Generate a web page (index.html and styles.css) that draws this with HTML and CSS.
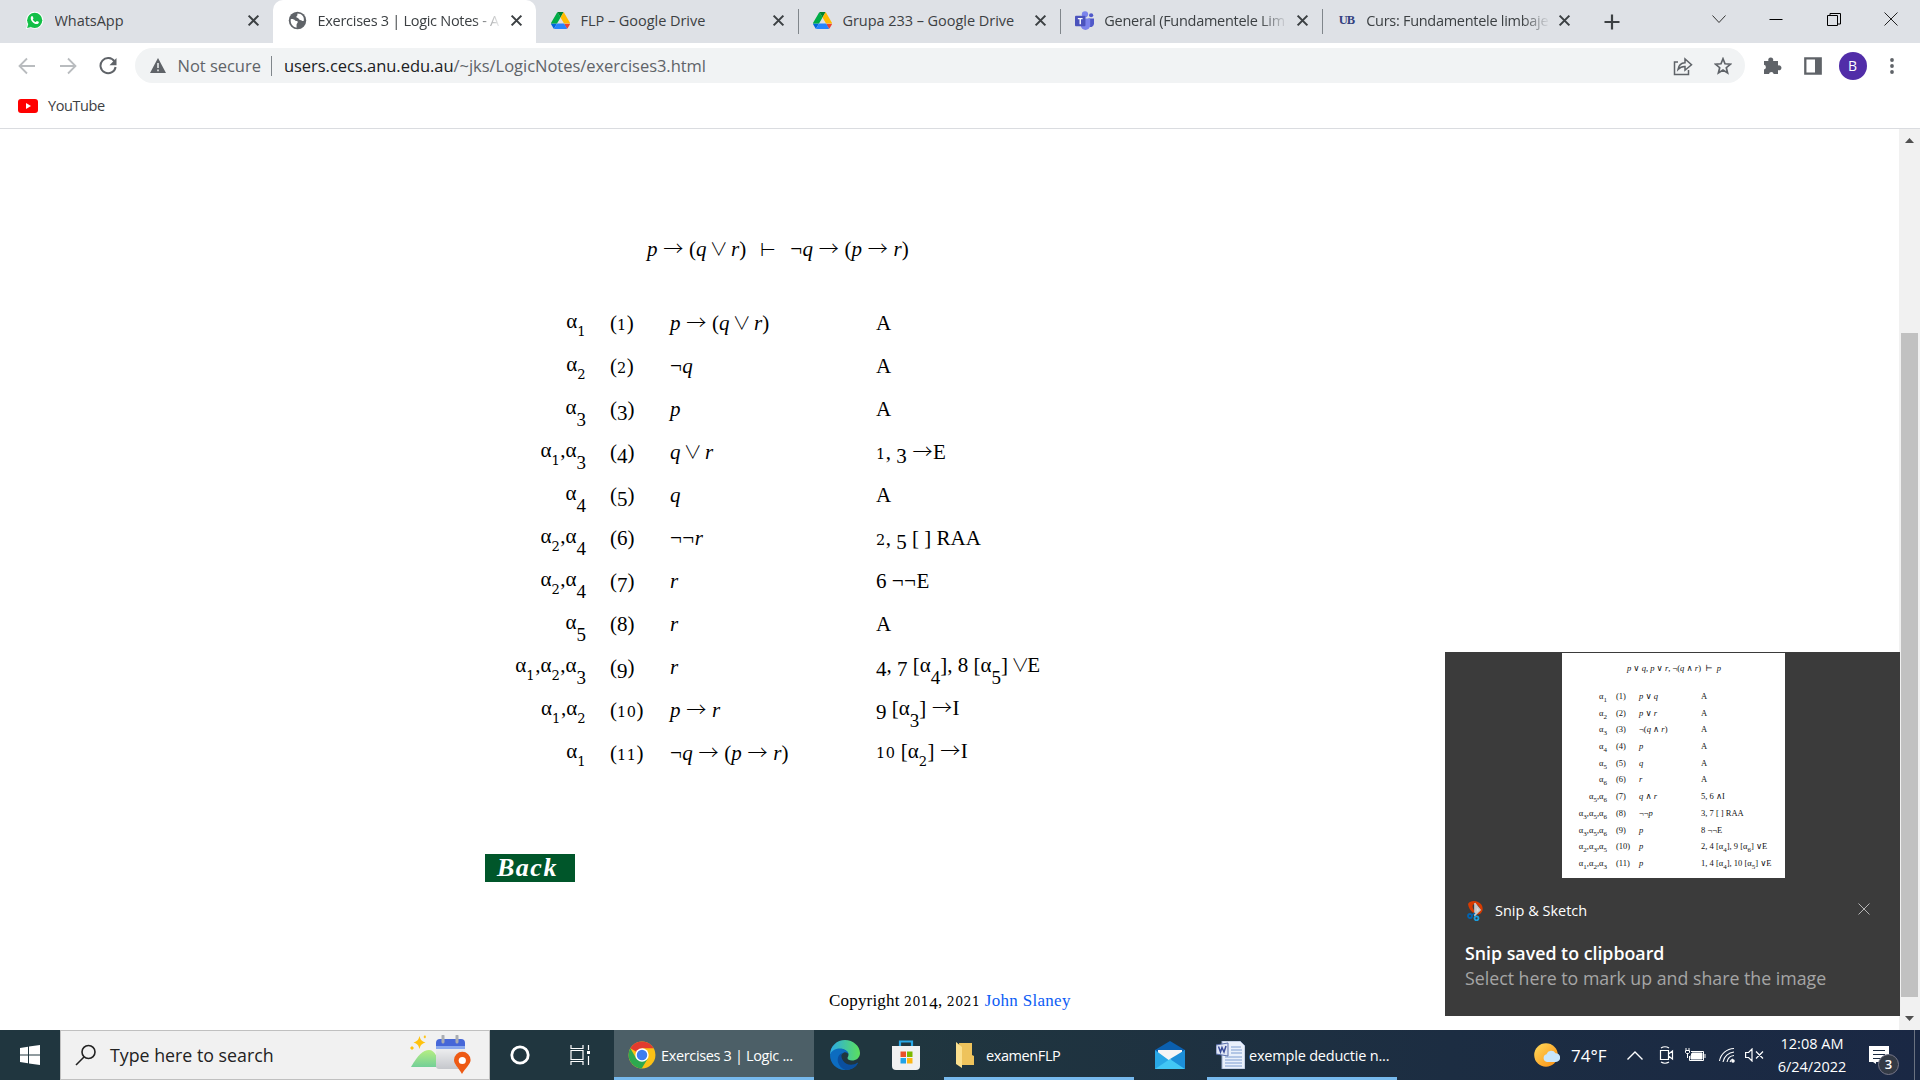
FILE: index.html
```
<!DOCTYPE html>
<html lang="en">
<head>
<meta charset="utf-8">
<title>Exercises 3 | Logic Notes</title>
<link rel="stylesheet" href="styles.css">
</head>
<body>
<svg width="0" height="0" class="defs">
  <defs>
    <symbol id="x" viewBox="0 0 12 12"><path d="M1.5 1.5l9 9M10.5 1.5l-9 9" stroke="#3c4043" stroke-width="1.9" fill="none"/></symbol>
    <symbol id="drive" viewBox="0 0 87 78"><path fill="#0066da" d="M6.6 66.85l3.85 6.65c.8 1.4 1.95 2.5 3.3 3.3l13.75-23.8H0c0 1.55.4 3.1 1.2 4.5z"/><path fill="#00ac47" d="M43.65 25L29.9 1.2c-1.35.8-2.5 1.9-3.3 3.3L1.2 48.5C.4 49.9 0 51.45 0 53h27.5z"/><path fill="#ea4335" d="M73.55 76.8c1.35-.8 2.5-1.9 3.3-3.3l8.95-15.5c.8-1.4 1.2-2.95 1.2-4.5H59.8l5.85 11.5z"/><path fill="#00832d" d="M43.65 25L57.4 1.2C56.05.4 54.5 0 52.9 0H34.4c-1.6 0-3.15.45-4.5 1.2z"/><path fill="#2684fc" d="M59.8 53H27.5L13.75 76.8c1.35.8 2.9 1.2 4.5 1.2h50.8c1.6 0 3.15-.45 4.5-1.2z"/><path fill="#ffba00" d="M73.4 26.5L60.7 4.5c-.8-1.4-1.95-2.5-3.3-3.3L43.65 25 59.8 53h27.45c0-1.55-.4-3.1-1.2-4.5z"/></symbol>
  </defs>
</svg>

<header class="tabs">
  <div class="tab first">
    <svg class="fav" viewBox="0 0 20 20"><path d="M1 19l1.4-4.8A9 9 0 1 1 6 17.7z" fill="#fff"/><circle cx="10.2" cy="9.8" r="8" fill="#12bf47"/><path d="M2.2 18l1.3-4.5 3.2 3.3z" fill="#12bf47"/><path d="M6.2 6.2c1-1.4 1.8-1 2.2.1l.5 1.2c.1.5-.8 1-.7 1.4.7 1.4 1.700 2.200 3 2.700.5 0 .9-1.200 1.300-1.100l1.900.9c.5.4-.1 2-1.200 2.300-3.600.8-8-3.900-7-7.500z" fill="#fff"/></svg>
    <span class="label">WhatsApp</span><svg class="close"><use href="#x"/></svg>
  </div>
  <div class="tab active">
    <svg class="fav" viewBox="0 0 20 20"><circle cx="10" cy="10" r="9.200" fill="#5f6368"/><path d="M3 8.500c2-.3 3.500.3 4.500 1.500 1 1 2.500 0 2.800 1.300.2 1.400-1.300 1.700-1.300 3.200v3C5 17.200 2 13 3 8.500zM10 2.500c-.5 1.200.5 1.700-.5 2.500-1 .6-1 2 .3 2.200 1.700.2 1.200 2.200 3 2.200 1.500 0 2 1.500 3.700 1.100C17.600 6 14.500 2.500 10 2.500z" fill="#fff"/></svg>
    <span class="label fade">Exercises 3 | Logic Notes - A</span><svg class="close"><use href="#x"/></svg>
  </div>
  <div class="tab">
    <svg class="fav"><use href="#drive"/></svg>
    <span class="label">FLP – Google Drive</span><svg class="close"><use href="#x"/></svg>
  </div>
  <div class="tab sep">
    <svg class="fav"><use href="#drive"/></svg>
    <span class="label">Grupa 233 – Google Drive</span><svg class="close"><use href="#x"/></svg>
  </div>
  <div class="tab sep">
    <svg class="fav" viewBox="0 0 20 20"><circle cx="10.500" cy="3.500" r="3.300" fill="#7b83eb"/><circle cx="17" cy="4.500" r="2.200" fill="#5059c9"/><path d="M14 8h6v5.500a3.500 3.500 0 0 1-5 3z" fill="#5059c9"/><path d="M6 8h10v7a5 5 0 0 1-10 0z" fill="#7b83eb"/><rect y="5" width="11" height="11" rx="1" fill="#4b53bc"/><path d="M3 8h5M5.500 8v6" stroke="#fff" stroke-width="1.500"/></svg>
    <span class="label fade">General (Fundamentele Lim</span><svg class="close"><use href="#x"/></svg>
  </div>
  <div class="tab sep">
    <span class="fav ub">UB</span>
    <span class="label fade">Curs: Fundamentele limbaje</span><svg class="close"><use href="#x"/></svg>
  </div>
  <div class="newtab"><svg width="16" height="16"><path d="M8 .500v15M.500 8h15" stroke="#3c4043" stroke-width="2.200"/></svg></div>
  <div class="winctl">
    <svg width="14" height="14" fill="none" stroke="#333"><path d="M.500 3.500l6.500 7 6.500-7"/></svg>
    <svg width="14" height="14" stroke="#000"><path d="M.500 7.500h13"/></svg>
    <svg width="14" height="14" fill="none" stroke="#000"><path d="M.500 3.500h10v10H.500zM3 3.500v-2h10.500V12H11"/></svg>
    <svg width="14" height="14" fill="none" stroke="#222"><path d="M.500.500l13 13M13.500.500l-13 13"/></svg>
  </div>
</header>

<div class="toolbar">
  <svg class="nav" viewBox="0 0 18 18" fill="none" stroke="#b9bcbf" stroke-width="1.800"><path d="M17 9H2M9 1.500L1.500 9 9 16.500"/></svg>
  <svg class="nav" viewBox="0 0 18 18" fill="none" stroke="#b9bcbf" stroke-width="1.800"><path d="M1 9h15M9 1.500L16.500 9 9 16.500"/></svg>
  <svg class="nav" viewBox="0 0 18 18"><path d="M15.500 4.500A7.600 7.600 0 1 0 16.600 10" fill="none" stroke="#5f6368" stroke-width="2"/><path d="M17.500 1v7.200h-7z" fill="#5f6368"/></svg>
  <div class="omnibox">
    <svg width="16" height="15" viewBox="0 0 16 15"><path d="M8 0l8 15H0z" fill="#5f6368"/><path d="M8 5v5M8 11.500v1.700" stroke="#f1f3f4" stroke-width="1.500"/></svg>
    <span class="insecure">Not secure</span>
    <span class="url"><span class="host">users.cecs.anu.edu.au</span>/~jks/LogicNotes/exercises3.html</span>
    <svg class="share" width="20" height="20" viewBox="0 0 20 20" fill="none" stroke="#5f6368" stroke-width="1.500"><path d="M5 6H1.500v12.500h14V14"/><path d="M5 13.500c.7-4.500 3-6.500 7-6.700V3l6.500 5.700-6.500 5.500v-3.700c-3-.1-5 .8-7 3z"/></svg>
    <svg width="18" height="18" viewBox="0 0 18 18"><path d="M9 1.800l2 5 5.500.4-4.200 3.500 1.300 5.300L9 13.100 4.400 16l1.300-5.300-4.200-3.500 5.500-.4z" fill="none" stroke="#5f6368" stroke-width="1.700"/></svg>
  </div>
  <svg class="ext" width="19" height="19" viewBox="0 0 19 19"><path d="M1 5h4.500a2.500 2.500 0 1 1 4.500 0H15v4.500a2.500 2.500 0 1 1 0 4.600V18h-4.300a2.400 2.400 0 0 0-4.700 0H1v-4.500a2.400 2.400 0 0 0 0-4.700z" fill="#5f6368"/></svg>
  <svg class="panel" width="18" height="18"><path d="M1.300 1.300h15.400v15.400H1.300z" fill="none" stroke="#5f6368" stroke-width="2.300"/><path d="M11 1h6v16h-6z" fill="#5f6368"/></svg>
  <span class="avatar">B</span>
  <svg class="menu" width="4" height="16" fill="#5f6368"><circle cx="2" cy="2" r="1.900"/><circle cx="2" cy="8" r="1.900"/><circle cx="2" cy="14" r="1.900"/></svg>
</div>

<div class="bookmarks">
  <svg width="20" height="14"><rect width="20" height="14" rx="3" fill="#f00"/><path d="M8 4v6l5-3z" fill="#fff"/></svg>
  <span>YouTube</span>
</div>

<div class="viewport">
  <main class="page">
    <div class="sequent"><i>p</i> <span class="ar">→</span> (<i>q</i> <span class="or">∨</span> <i>r</i>)<span class="ts">⊢</span><span class="ng">¬</span><i>q</i> <span class="ar">→</span> (<i>p</i> <span class="ar">→</span> <i>r</i>)</div>
    <div class="proof">
      <div class="line"><span class="as">α<sub><span class="lo">1</span></sub></span><span>(<span class="lo">1</span>)</span><span><i>p</i> <span class="ar">→</span> (<i>q</i> <span class="or">∨</span> <i>r</i>)</span><span>A</span></div>
      <div class="line"><span class="as">α<sub><span class="lo">2</span></sub></span><span>(<span class="lo">2</span>)</span><span><span class="ng">¬</span><i>q</i></span><span>A</span></div>
      <div class="line"><span class="as">α<sub><span class="dn">3</span></sub></span><span>(<span class="dn">3</span>)</span><span><i>p</i></span><span>A</span></div>
      <div class="line"><span class="as">α<sub><span class="lo">1</span></sub>,α<sub><span class="dn">3</span></sub></span><span>(<span class="dn">4</span>)</span><span><i>q</i> <span class="or">∨</span> <i>r</i></span><span><span class="lo">1</span>, <span class="dn">3</span> <span class="ar">→</span>E</span></div>
      <div class="line"><span class="as">α<sub><span class="dn">4</span></sub></span><span>(<span class="dn">5</span>)</span><span><i>q</i></span><span>A</span></div>
      <div class="line"><span class="as">α<sub><span class="lo">2</span></sub>,α<sub><span class="dn">4</span></sub></span><span>(<span class="up">6</span>)</span><span><span class="ng">¬¬</span><i>r</i></span><span><span class="lo">2</span>, <span class="dn">5</span> [ ] RAA</span></div>
      <div class="line"><span class="as">α<sub><span class="lo">2</span></sub>,α<sub><span class="dn">4</span></sub></span><span>(<span class="dn">7</span>)</span><span><i>r</i></span><span><span class="up">6</span> <span class="ng">¬¬</span>E</span></div>
      <div class="line"><span class="as">α<sub><span class="dn">5</span></sub></span><span>(<span class="up">8</span>)</span><span><i>r</i></span><span>A</span></div>
      <div class="line"><span class="as">α<sub><span class="lo">1</span></sub>,α<sub><span class="lo">2</span></sub>,α<sub><span class="dn">3</span></sub></span><span>(<span class="dn">9</span>)</span><span><i>r</i></span><span class="raised"><span class="dn">4</span>, <span class="dn">7</span> [α<sub><span class="dn">4</span></sub>], <span class="up">8</span> [α<sub><span class="dn">5</span></sub>] <span class="or">∨</span>E</span></div>
      <div class="line"><span class="as">α<sub><span class="lo">1</span></sub>,α<sub><span class="lo">2</span></sub></span><span>(<span class="lo">10</span>)</span><span><i>p</i> <span class="ar">→</span> <i>r</i></span><span class="raised"><span class="dn">9</span> [α<sub><span class="dn">3</span></sub>] <span class="ar">→</span>I</span></div>
      <div class="line"><span class="as">α<sub><span class="lo">1</span></sub></span><span>(<span class="lo">11</span>)</span><span><span class="ng">¬</span><i>q</i> <span class="ar">→</span> (<i>p</i> <span class="ar">→</span> <i>r</i>)</span><span class="raised"><span class="lo">10</span> [α<sub><span class="lo">2</span></sub>] <span class="ar">→</span>I</span></div>
    </div>
    <a class="back">Back</a>
    <footer class="copy">Copyright <span class="lo">201</span><span class="dn">4</span>, <span class="lo">2021</span> <a>John Slaney</a></footer>
  </main>
  <div class="scroll">
    <svg width="9" height="5"><path d="M4.500 0L9 5H0z" fill="#505050"/></svg>
    <div class="thumb"></div>
    <svg width="9" height="5"><path d="M4.500 5L9 0H0z" fill="#505050"/></svg>
  </div>
</div>

<aside class="toast">
  <div class="snip">
    <div class="snip-title"><i>p</i> ∨ <i>q</i>, <i>p</i> ∨ <i>r</i>, ¬(<i>q</i> ∧ <i>r</i>) &nbsp;⊢&nbsp; <i>p</i></div>
    <div class="sl"><span class="as">α<sub>1</sub></span><span>(1)</span><span><i>p</i> ∨ <i>q</i></span><span>A</span></div>
    <div class="sl"><span class="as">α<sub>2</sub></span><span>(2)</span><span><i>p</i> ∨ <i>r</i></span><span>A</span></div>
    <div class="sl"><span class="as">α<sub>3</sub></span><span>(3)</span><span>¬(<i>q</i> ∧ <i>r</i>)</span><span>A</span></div>
    <div class="sl"><span class="as">α<sub>4</sub></span><span>(4)</span><span><i>p</i></span><span>A</span></div>
    <div class="sl"><span class="as">α<sub>5</sub></span><span>(5)</span><span><i>q</i></span><span>A</span></div>
    <div class="sl"><span class="as">α<sub>6</sub></span><span>(6)</span><span><i>r</i></span><span>A</span></div>
    <div class="sl"><span class="as">α<sub>5</sub>,α<sub>6</sub></span><span>(7)</span><span><i>q</i> ∧ <i>r</i></span><span>5, 6 ∧I</span></div>
    <div class="sl"><span class="as">α<sub>3</sub>,α<sub>5</sub>,α<sub>6</sub></span><span>(8)</span><span>¬¬<i>p</i></span><span>3, 7 [ ] RAA</span></div>
    <div class="sl"><span class="as">α<sub>3</sub>,α<sub>5</sub>,α<sub>6</sub></span><span>(9)</span><span><i>p</i></span><span>8 ¬¬E</span></div>
    <div class="sl"><span class="as">α<sub>2</sub>,α<sub>3</sub>,α<sub>5</sub></span><span>(10)</span><span><i>p</i></span><span>2, 4 [α<sub>4</sub>], 9 [α<sub>6</sub>] ∨E</span></div>
    <div class="sl"><span class="as">α<sub>1</sub>,α<sub>2</sub>,α<sub>3</sub></span><span>(11)</span><span><i>p</i></span><span>1, 4 [α<sub>4</sub>], 10 [α<sub>5</sub>] ∨E</span></div>
  </div>
  <div class="app">
    <svg width="16" height="20" viewBox="0 0 16 20"><path d="M1 3C3-.500 8-.500 11 1c5 2 6 8 3 11-2 2-4 1.500-5 .5 3-.5 4-3 3.500-5.500C12 4 9 3 6 3.500c-1 2.500 0 5 2 6.500l-1.500 2C3.500 10 1.500 7 1 3z" fill="#d83b01"/><path d="M8 2v13M9 4v9l4-4z" stroke="#c8c8c8" stroke-width="1.700" fill="#ddd"/><circle cx="3" cy="15" r="2" fill="none" stroke="#0063b1" stroke-width="1.800"/><circle cx="9.500" cy="17.300" r="2" fill="none" stroke="#1a9fe0" stroke-width="1.800"/><path d="M5 14l3-2" stroke="#0063b1" stroke-width="1.500"/></svg>
    <span>Snip &amp; Sketch</span>
    <svg class="dismiss" width="12" height="12"><path d="M.500.500l11 11M11.500.500l-11 11" stroke="#b5b5b5"/></svg>
  </div>
  <div class="saved">Snip saved to clipboard</div>
  <div class="hint">Select here to mark up and share the image</div>
</aside>

<nav class="taskbar">
  <div class="start"><svg width="20" height="20" fill="#fff"><path d="M0 3l8-1.200v7.700H0zM9 1.600L20 0v9.500H9zM0 10.500h8v7.700L0 17zM9 10.500h11V20L9 18.400z"/></svg></div>
  <div class="search">
    <svg width="22" height="22" viewBox="0 0 22 22" fill="none" stroke="#222" stroke-width="1.600"><circle cx="13.500" cy="8" r="6.500"/><path d="M9 13l-8 8"/></svg>
    <span>Type here to search</span>
    <svg class="doodle" width="62" height="40" viewBox="0 0 62 40"><defs><linearGradient id="hill" x2="0" y2="1"><stop stop-color="#b5ee82"/><stop offset="1" stop-color="#73cf98"/></linearGradient><linearGradient id="cal" x2="0" y2="1"><stop stop-color="#fff"/><stop offset="1" stop-color="#c5c7cc"/></linearGradient></defs><path d="M1 32C8 20 13 15 19 15s9 8 11 17z" fill="url(#hill)"/><path d="M9.500 1c1 4 2 5 6 6.500-4 1.500-5 2.500-6 6.500-1-4-2-5-6-6.500 4-1.500 5-2.500 6-6.500zM15 0l1 2-1 1.500L13.500 2zM2 11l2 2-2 2-2-2z" fill="#ffc20e"/><rect x="26" y="5" width="29" height="29" rx="3" fill="url(#cal)"/><path d="M26 13V8a4 4 0 0 1 4-4h21a4 4 0 0 1 4 4v5z" fill="#4667d8"/><path d="M26 11h29v3H26z" fill="#8aa9ee"/><path d="M33 1v6M47 1v6" stroke="#a9adb3" stroke-width="3" stroke-linecap="round"/><path d="M52 39c-4-7-8-10-8-14a8.300 8.300 0 0 1 16.600 0c0 4-5 8-8.600 14z" fill="#ee5a14"/><circle cx="52.300" cy="25.500" r="3.600" fill="#fff"/></svg>
  </div>
  <div class="cortana"><svg width="20" height="20"><circle cx="10" cy="10" r="8.200" fill="none" stroke="#fff" stroke-width="2.800"/></svg></div>
  <div class="view"><svg width="20" height="20" fill="none" stroke="#fff" stroke-width="1.200"><path d="M1 0v3.500h12V0M1 5.500h12v9H1zM1 20v-3.500h12V20M18.500 0v5M18.500 11v9"/><path d="M17 6h3v3h-3z" fill="#fff" stroke="none"/></svg></div>
  <div class="task chrome"><svg width="28" height="28" viewBox="0 0 48 48"><circle cx="24" cy="24" r="23" fill="#fbc116"/><path d="M24 24L4 12.500A23 23 0 0 1 44 12.500H24z" fill="#e33b2e"/><path d="M24 24l10 6-10.500 17A23 23 0 0 1 4 12.500l10 17z" fill="#2da94f"/><circle cx="24" cy="24" r="11.500" fill="#fff"/><circle cx="24" cy="24" r="9" fill="#3f7df0"/></svg><span>Exercises 3 | Logic ...</span></div>
  <div class="edge"><svg width="30" height="30" viewBox="0 0 30 30"><defs><linearGradient id="eg"><stop stop-color="#2ba9e8"/><stop offset="1" stop-color="#5be05c"/></linearGradient></defs><path d="M0 15C0 6 7 0 15 0s15 6 15 13c0 5-4 7.500-8 7.500-3 0-4.500-1-4.500-2.500 0-1 1-1.500 1-3.500 0-3-4-5.500-8-5.500-6 0-9 4-10.500 6z" fill="url(#eg)"/><path d="M0 15C1 11 5 8.500 10 8.500c4 0 8.500 2.500 8.500 6-1-2-3-2.500-4.500-2-5 2-5 9 1 13 4 2 9 1 13-3-2 4.500-7 7.500-13 7.500C6 30 0 23 0 15z" fill="#0c6cc0"/><path d="M12 13c-7 3-5 14 3.500 17C23 30 27 26 28 22.500 18 29 9 20 12 13z" fill="#0a4f9f"/></svg></div>
  <div class="store"><svg width="30" height="30"><path d="M9 8V1.500h12V8" fill="none" stroke="#29a9e8" stroke-width="2.200"/><path d="M1 6h28v20a4 4 0 0 1-4 4H5a4 4 0 0 1-4-4z" fill="#f1f1f1"/><path d="M9.500 11.500H15V17H9.500z" fill="#e8502a"/><path d="M16 11.500h5.500V17H16z" fill="#7cb900"/><path d="M9.500 18H15v5.500H9.500z" fill="#20a3e8"/><path d="M16 18h5.500v5.500H16z" fill="#fcb614"/></svg></div>
  <div class="task folder"><svg width="18" height="26"><path d="M3 1h13v12l2 1v9H5z" fill="#eec35c"/><path d="M0 0l6 5v21l-6-4z" fill="#fbe08e"/></svg><span>examenFLP</span></div>
  <div class="mail"><svg width="30" height="28"><path d="M0 9L15 0l15 9v5H0z" fill="#0b5fae"/><path d="M3 9h24v10H3z" fill="#f5f5f5"/><path d="M0 9l15 11 15-11v19H0z" fill="#29a8e6"/><path d="M15 18L0 28h30z" fill="#42c7f5"/><path d="M30 9v19L15 18z" fill="#1c8fd9"/></svg></div>
  <div class="task word"><svg width="29" height="28"><path d="M6 0h18l5 5v23H6z" fill="#e9f0fb" stroke="#9fb0cf"/><path d="M15 6h10M15 9h11M15 12h11M9 16h17M9 19h17M9 22h17M9 25h17" stroke="#7d9cd0"/><path d="M0 4l12-2v13L0 13z" fill="#dfe6f5" stroke="#5a6fab"/><path d="M2.500 5.500L4.500 11 6 6.500 8 11l2-6" fill="none" stroke="#3a4d99" stroke-width="1.500"/></svg><span>exemple deductie n...</span></div>
  <div class="tray">
    <svg class="wx" width="26" height="25"><defs><linearGradient id="sun" x1="0" y1="0" x2="1" y2="1"><stop stop-color="#ffdb5c"/><stop offset="1" stop-color="#fb8c10"/></linearGradient></defs><circle cx="12" cy="12" r="11.800" fill="url(#sun)"/><path d="M13 19a4 4 0 0 1-.5-7.800 5 5 0 0 1 9-1 4.400 4.400 0 0 1 .5 8.800z" fill="#c8e6fb"/></svg>
    <span class="temp">74°F</span>
    <svg class="chev" width="16" height="9" fill="none" stroke="#fff" stroke-width="1.400"><path d="M.500 8.500L8 1l7.500 7.500"/></svg>
    <svg class="cam" width="15" height="18" fill="none" stroke="#fff" stroke-width="1.200"><path d="M1.500 4.500h8v9h-8zM9.500 8l4-3v8l-4-3M2 2Q6 -.500 10 2M2 16Q6 18.500 10 16"/></svg>
    <svg class="bat" width="21" height="14" fill="none" stroke="#fff"><path d="M6 3.500h12.500v9h-14V8M20 6v4"/><path d="M7 5h10v6H6V8z" fill="#fff"/><path d="M1 0v2M4 0v2M.500 2.500h4v2l-1 1h-2l-1-1zM2.500 6v4"/></svg>
    <svg class="wifi" width="17" height="16" fill="none" stroke="#fff" stroke-width="1.100"><path d="M.500 14A15 15 0 0 1 15 1.500M4 15A12 12 0 0 1 15 5M8 15a8 8 0 0 1 7-6.500M11 15a4.500 4.500 0 0 1 3-3"/><circle cx="14" cy="14" r="1.200" fill="#fff"/></svg>
    <svg class="vol" width="19" height="14" fill="none" stroke="#fff" stroke-width="1.200"><path d="M.600 4.500h3L7 1v12L3.600 9.500h-3zM11 3.500l7 7M18 3.500l-7 7"/></svg>
    <div class="clock"><span>12:08 AM</span><span>6/24/2022</span></div>
    <div class="note"><svg width="20" height="18"><path d="M0 0h20v16H7v2l-3-2H0z" fill="#fff"/><path d="M4 4.500h12M4 8.500h12M4 12.500h8" stroke="#1c2c42" stroke-width="1.200"/></svg><span class="badge">3</span></div>
    <div class="peek"></div>
  </div>
</nav>
</body>
</html>
```
FILE: styles.css
```
* { box-sizing: border-box; }
body { margin: 0; width: 1920px; height: 1080px; overflow: hidden; display: flex; flex-direction: column; background: #fff; font-family: "Open Sans", "Noto Sans", sans-serif; color: #3c4043; position: relative; }
.defs { position: absolute; }
svg { flex: none; display: block; }

/* browser tab strip */
.tabs { height: 43px; flex: none; background: #dee1e6; display: flex; align-items: center; }
.tab { width: 261.900px; height: 43px; flex: none; display: flex; align-items: center; padding: 0 13px 2px 15px; position: relative; }
.tab.first { width: 273px; padding-left: 25px; padding-right: 13px; }
.tab.active { background: #fff; border-radius: 10px 10px 0 0; width: 263px; padding-right: 13px; }
.tab.sep::before { content: ""; position: absolute; left: 0; top: 9px; width: 1px; height: 25px; background: #80868b; }
.fav { width: 19px; height: 19px; flex: none; margin-right: 10.500px; }
.label { flex: 1; min-width: 0; white-space: nowrap; overflow: hidden; font-size: 14.500px; line-height: 22px; letter-spacing: -.04px; }
.fade { letter-spacing: -.28px; mask-image: linear-gradient(90deg, #000 calc(100% - 28px), transparent); }
.close { width: 13px; height: 13px; margin-left: 8px; }
.ub { font: bold 12.500px/19px "Liberation Serif", serif; color: #33407f; letter-spacing: -1px; padding-left: 2px; }
.newtab { width: 56px; display: flex; justify-content: center; }
.winctl { flex: 1; display: flex; gap: 43.300px; justify-content: flex-end; padding: 0 22px 6px 0; }

/* toolbar */
.toolbar { height: 45px; flex: none; display: flex; align-items: center; padding-left: 18px; }
.nav { width: 18px; height: 18px; margin-right: 22.500px; }
.omnibox { width: 1610px; height: 35px; border-radius: 18px; background: #f1f3f4; margin-left: -5px; display: flex; align-items: center; padding: 0 13px 0 15px; font-size: 16.500px; letter-spacing: -.03px; color: #5f6368; white-space: nowrap; }
.insecure { margin-left: 12px; padding-right: 10px; margin-right: 12px; border-right: 1px solid #80868b; line-height: 20px; }
.url { flex: 1; line-height: 24px; }
.host { color: #202124; }
.share { margin-right: 21px; }
.ext { margin: 0 22px 0 18px; }
.avatar { width: 28px; height: 28px; border-radius: 50%; background: #512da8; color: #fff; font-size: 14px; line-height: 28px; text-align: center; margin: 0 23px 0 17px; }
.bookmarks { height: 41px; flex: none; border-bottom: 1px solid #dadce0; display: flex; align-items: center; gap: 10px; padding: 0 0 5px 18px; font-size: 14.500px; letter-spacing: -.4px; }

/* document */
.viewport { flex: 1; min-height: 0; display: flex; }
.page { flex: 1; font-family: "Liberation Serif", "DejaVu Serif", serif; font-size: 21px; color: #000; padding-top: 99px; white-space: nowrap; }
.sequent { padding-left: 647px; height: 43px; line-height: 43px; margin-bottom: 31px; }
.line { display: grid; grid-template-columns: 90px 60px 206px 400px; padding-left: 496px; height: 43px; line-height: 42px; }
.line > * { padding-left: 24px; }
.as { text-align: right; }
.line > .as { padding: 0; line-height: 38px; }
.line .raised { line-height: 39px; }
.page sub { font-size: 19px; line-height: 0; vertical-align: -8px; }
.ar { font: 300 20px/0 "Noto Sans CJK JP", "DejaVu Sans", sans-serif; margin: 0 .500px; }
.or { font: 300 18px/0 "Noto Sans CJK JP", "DejaVu Sans", sans-serif; margin: 0 -2px; }
.ng { letter-spacing: .500px; }
.ts { font: 200 18px/0 "DejaVu Sans Light", "DejaVu Sans", sans-serif; margin: 0 14px; }
.lo { font-family: "DejaVu Serif", serif; font-size: .69em; line-height: 0; letter-spacing: .5px; }
.dn { vertical-align: -.2em; line-height: 0; }
.back { display: block; width: 90px; height: 28px; margin: 79px 0 0 485px; background: #00562a; color: #fff; font: italic bold 26px/28px "Liberation Serif", serif; padding-left: 12px; letter-spacing: 1.500px; }
.copy { margin: 107px 0 0 829px; font-size: 17px; line-height: 24px; letter-spacing: .180px; }
.copy .lo { font-size: .73em; }
.copy a { color: #0b5cf5; letter-spacing: .300px; }
.scroll { width: 21px; background: #f1f1f1; display: flex; flex-direction: column; align-items: center; padding: 9px 0; }
.thumb { width: 17px; height: 664px; margin: 190px 0 auto; background: #c1c1c1; }

/* notification */
.toast { position: absolute; left: 1445px; top: 652px; width: 455px; height: 364px; background: #3b3b3b; color: #fff; padding-top: 1px; white-space: nowrap; }
.snip { width: 223px; height: 225px; margin-left: 117px; background: #fff; color: #111; font: 8.500px "Liberation Serif", "DejaVu Serif", serif; padding-top: 6px; }
.snip-title { text-align: center; height: 20px; line-height: 19px; margin-bottom: 9px; padding-left: 1px; }
.sl { height: 16.700px; line-height: 17px; display: grid; grid-template-columns: 45px 32px 23px 1fr; }
.sl > :nth-child(2) { padding-left: 9px; }
.sl > :nth-child(4) { padding-left: 39px; }
.snip sub { font-size: 7px; line-height: 0; vertical-align: -3px; }
.app { display: flex; align-items: center; height: 65px; padding: 0 30px 0 22px; gap: 12px; font-size: 14.500px; }
.dismiss { margin: -3px 0 0 auto; }
.saved { padding-left: 20px; font-size: 17.800px; font-weight: 600; line-height: 21px; margin-bottom: 1px; }
.hint { padding-left: 20px; font-size: 17.750px; line-height: 26px; color: #a6a6a6; }

/* taskbar */
.taskbar { height: 50px; flex: none; display: flex; background: linear-gradient(90deg, #20363f 0, #20363f 900px, #1c2d42 1450px, #1a2844); color: #fff; white-space: nowrap; }
.taskbar > div { display: flex; align-items: center; flex: none; }
.start { width: 60px; padding-left: 20px; }
.search { width: 430px; background: #f1f1f1; border: 1px solid #c0c0c0; color: #222; padding: 0 17px 0 14px; font-size: 17.800px; }
.search span { flex: 1; margin-left: 13px; }
.cortana { width: 61px; padding-left: 20px; }
.view { width: 63px; padding-left: 19px; }
.task { border-bottom: 3px solid #76b9ed; font-size: 14.500px; padding-top: 3px; }
.chrome { width: 200px; background: #4c5f67; padding-left: 14px; gap: 5px; letter-spacing: -.350px; }
.edge { width: 77px; padding-left: 16px; }
.store { width: 53px; }
.folder { width: 190px; padding-left: 12px; gap: 12px; letter-spacing: -.4px; }
.mail { width: 73px; padding-left: 21px; }
.word { width: 190px; padding-left: 9px; gap: 4px; letter-spacing: -.2px; }
.tray { flex: 1 !important; }
.wx { margin-left: 137px; }
.temp { font-size: 17px; margin-left: 11px; width: 56px; }
.chev { margin-right: 16px; }
.cam { margin-right: 11px; }
.bat { margin-right: 13px; }
.wifi { margin-right: 9px; }
.clock { width: 96px; display: flex; flex-direction: column; align-items: center; font-size: 14.500px; line-height: 23px; }
.note { position: relative; margin-left: 9px; width: 45px; }
.badge { position: absolute; left: 9px; top: 8px; width: 21px; height: 21px; border-radius: 50%; background: #333a45; border: 1px solid #778; font-size: 13px; font-weight: 600; line-height: 19px; text-align: center; }
.peek { width: 1px; height: 50px; background: #6a7280; }
```
